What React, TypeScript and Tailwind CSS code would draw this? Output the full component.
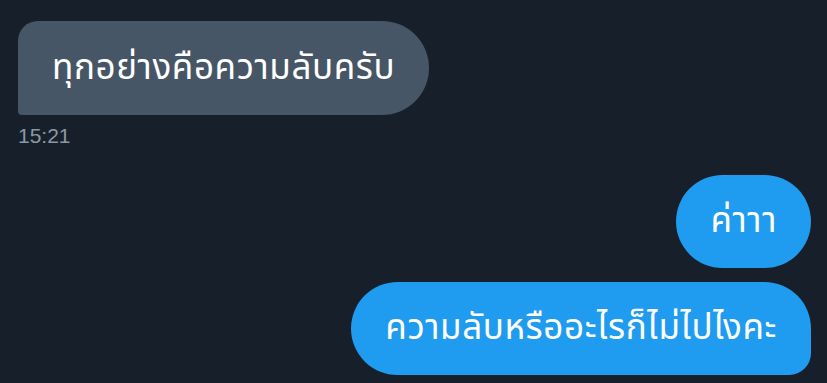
import React from "react";

const thai = "font-['Noto_Sans_Thai','Noto_Sans',sans-serif] text-[35px] tracking-[0.6px] leading-none";

export default function App() {
    return (
        <div className="w-[827px] h-[383px] bg-[#17202a] overflow-hidden pt-[21px] pl-[18px] pr-[16px]">
            {/* received */}
            <div className="flex flex-col items-start">
                <div className={`h-[94px] flex items-center px-[34px] bg-[#465666] text-white rounded-[47px] rounded-tl-[20px] rounded-bl-[4px] ${thai}`}>
                    ทุกอย่างคือความลับครับ
                </div>
                <span className="mt-[9px] text-[21px] leading-[24px] text-[#8a98a5] font-['Liberation_Sans',sans-serif]">
                    15:21
                </span>
            </div>

            {/* sent */}
            <div className="flex flex-col items-end gap-[14px] mt-[27px]">
                <div className={`h-[93px] flex items-center px-[34px] bg-[#1f9bef] text-white rounded-[47px] ${thai}`}>
                    ค่าาา
                </div>
                <div className={`h-[93px] flex items-center px-[34px] bg-[#1f9bef] text-white rounded-[47px] rounded-br-[22px] ${thai}`}>
                    ความลับหรืออะไรก็ไม่ไปไงคะ
                </div>
            </div>
        </div>
    );
}
